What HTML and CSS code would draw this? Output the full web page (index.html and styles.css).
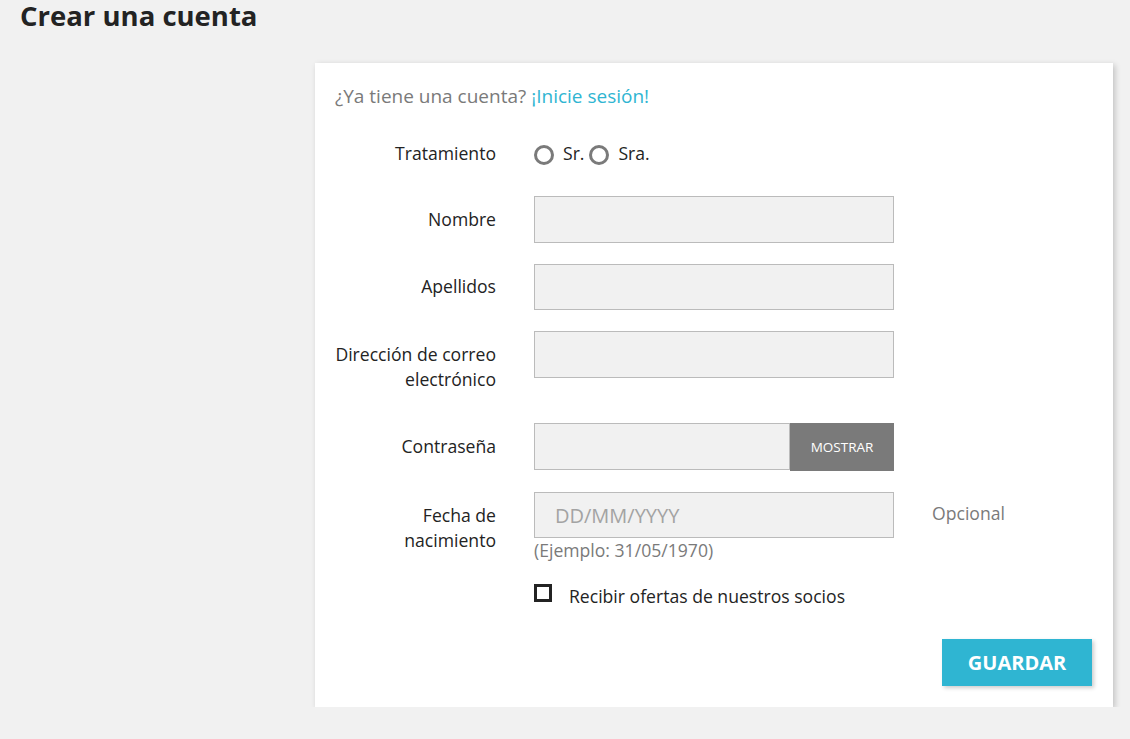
FILE: index.html
```html
<!DOCTYPE html>
<html lang="es">
<head>
<meta charset="utf-8">
<title>Crear una cuenta</title>
<link rel="stylesheet" href="styles.css">
</head>
<body>
<h1 class="page-title">Crear una cuenta</h1>
<section class="card">
  <p class="login-hint">¿Ya tiene una cuenta? <a href="#" class="link">¡Inicie sesión!</a></p>
  <form class="form">
    <div class="row row-radio">
      <label class="label">Tratamiento</label>
      <div class="field radios">
        <span class="radio"></span><span class="radio-text">Sr.</span>
        <span class="radio"></span><span class="radio-text">Sra.</span>
      </div>
    </div>
    <div class="row">
      <label class="label">Nombre</label>
      <div class="field"><input class="input" type="text"></div>
    </div>
    <div class="row">
      <label class="label">Apellidos</label>
      <div class="field"><input class="input" type="text"></div>
    </div>
    <div class="row">
      <label class="label">Dirección de correo electrónico</label>
      <div class="field"><input class="input" type="text"></div>
    </div>
    <div class="row">
      <label class="label">Contraseña</label>
      <div class="field group">
        <input class="input input-grow" type="password">
        <button type="button" class="show-btn">MOSTRAR</button>
      </div>
    </div>
    <div class="row">
      <label class="label">Fecha de nacimiento</label>
      <div class="field">
        <input class="input" type="text" placeholder="DD/MM/YYYY">
        <div class="help">(Ejemplo: 31/05/1970)</div>
      </div>
      <div class="comment">Opcional</div>
    </div>
    <div class="row row-check">
      <div class="label"></div>
      <div class="field check">
        <span class="checkbox"></span>
        <span class="check-text">Recibir ofertas de nuestros socios</span>
      </div>
    </div>
    <div class="actions">
      <button type="button" class="save-btn">GUARDAR</button>
    </div>
  </form>
</section>
</body>
</html>
```

FILE: styles.css
```css
* { box-sizing: border-box; }
html, body {
  margin: 0;
  padding: 0;
  background: #f1f1f1;
  font-family: "Open Sans", "Noto Sans", sans-serif;
  color: #232323;
}
.page-title {
  margin: 0 0 0 20px;
  font-size: 27.5px;
  line-height: 31px;
  font-weight: 700;
  color: #232323;
}
.card {
  margin: 32px 0 0 315px;
  width: 798px;
  background: #fff;
  padding: 21px 20px 21px 20px;
  box-shadow: 2px 2px 6px 0 rgba(0,0,0,.2);
}
.login-hint {
  margin: 0 0 19px 0;
  font-size: 19px;
  line-height: 25px;
  color: #7a7a7a;
}
.link { color: #2fb5d2; text-decoration: none; }
.row {
  display: grid;
  grid-template-columns: 161px 360px auto;
  column-gap: 38px;
  margin-bottom: 20.8px;
  font-size: 17.6px;
  line-height: 25px;
}
.row-radio {
  padding-top: 2px;
  margin-bottom: 19.6px;
}
.label {
  text-align: right;
  padding: 10.8px 0;
  color: #232323;
}
.field { min-width: 0; }
.input {
  display: block;
  width: 100%;
  height: 46.6px;
  background: #f1f1f1;
  border: 1px solid #bbbbbb;
  padding: 0 20px;
  font-family: inherit;
  font-size: 20px;
  color: #232323;
  outline: none;
}
.input::placeholder { color: #a3a3a3; }
.radios {
  display: flex;
  align-items: center;
  height: 46.6px;
}
.radio {
  width: 20px;
  height: 20px;
  border: 3px solid #7a7a7a;
  border-radius: 50%;
  flex: none;
  margin-top: 3px;
}
.radio-text { margin: 0 5px 0 9px; }
.group { display: flex; }
.input-grow { flex: 1; width: auto; min-width: 0; }
.show-btn {
  flex: none;
  width: 104px;
  height: 47.6px;
  border: none;
  background: #7a7a7a;
  color: #fff;
  font-family: inherit;
  font-size: 13.5px;
  padding: 0;
}
.help {
  color: #7a7a7a;
  font-size: 17.6px;
  line-height: 25px;
}
.comment {
  padding: 10.8px 0;
  color: #7a7a7a;
  margin-top: -2px;
}
.row-check .label { padding: 0; }
.check {
  display: flex;
  align-items: flex-start;
}
.checkbox {
  width: 18px;
  height: 18px;
  border: 3px solid #232323;
  flex: none;
  margin-top: 0;
}
.check-text { margin-left: 17px; line-height: 25px; }
.actions {
  display: flex;
  justify-content: flex-end;
  padding-top: 9px;
}
.save-btn {
  width: 150px;
  height: 47px;
  margin-right: 1px;
  border: none;
  background: #2fb5d2;
  color: #fff;
  font-family: inherit;
  font-weight: 700;
  font-size: 20px;
  box-shadow: 2px 2px 4px 0 rgba(0,0,0,.2);
  padding: 0;
}
```
